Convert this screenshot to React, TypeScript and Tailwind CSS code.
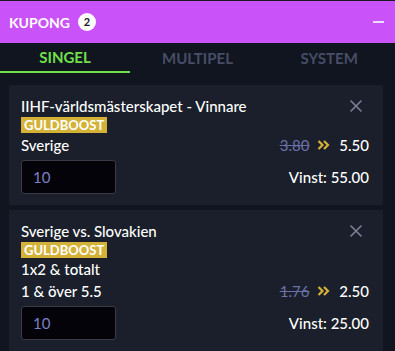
import React from 'react';

const CloseIcon = () => (
  <svg width="12" height="12" viewBox="0 0 12 12" className="text-[#7d8096]">
    <path d="M1 1L11 11M11 1L1 11" stroke="currentColor" strokeWidth="1.6" strokeLinecap="round" />
  </svg>
);

const Chevrons = () => (
  <svg width="14" height="10" viewBox="0 0 14 10" className="text-[#d6b23a]">
    <path d="M1.5 1L5.5 5L1.5 9M7 1L11 5L7 9" stroke="currentColor" strokeWidth="2.2" fill="none" />
  </svg>
);

type Bet = {
  title: string;
  lines: string[];
  oldOdds: string;
  odds: string;
  win: string;
};

const bets: Bet[] = [
  { title: 'IIHF-världsmästerskapet - Vinnare', lines: ['Sverige'], oldOdds: '3.80', odds: '5.50', win: '55.00' },
  { title: 'Sverige vs. Slovakien', lines: ['1x2 & totalt', '1 & över 5.5'], oldOdds: '1.76', odds: '2.50', win: '25.00' },
];

const BetCard = ({ bet }: { bet: Bet }) => {
  const last = bet.lines[bet.lines.length - 1];
  const rest = bet.lines.slice(0, -1);
  return (
    <div className="bg-[#1a1f2b] pl-3 pr-3 pt-[11px] pb-[11px] leading-[20px]">
      <div className="flex items-center justify-between h-[20px]">
        <span className="text-[15px] font-medium text-white">{bet.title}</span>
        <span className="mr-[9px] flex"><CloseIcon /></span>
      </div>
      <div className="mt-[1px] w-fit bg-[#d4b238] px-[3px] h-[16px] leading-[16px] text-[13px] font-bold text-white">
        GULDBOOST
      </div>
      {rest.map((l) => (
        <div key={l} className="text-[15px] font-medium text-white h-[20px] leading-[20px] mt-[1px]">{l}</div>
      ))}
      <div className="flex items-center justify-between h-[20px] mt-[2px]">
        <span className="text-[15px] font-medium text-white">{last}</span>
        <div className="flex items-center gap-[8px] mr-[2px]">
          <span className="text-[15px] text-[#6b72a8] line-through">{bet.oldOdds}</span>
          <Chevrons />
          <span className="text-[15px] font-medium text-white">{bet.odds}</span>
        </div>
      </div>
      <div className="flex items-center justify-between mt-[5px]">
        <div className="w-[95px] h-[34px] bg-[#05030a] border border-[#3b3a45] rounded-[3px] flex items-center pl-[11px] text-[15px] text-[#7a80c6]">
          10
        </div>
        <span className="text-[15px] font-medium text-white mr-[2px]">Vinst: {bet.win}</span>
      </div>
    </div>
  );
};

const App = () => {
  return (
    <div className="w-[395px] h-[351px] overflow-hidden bg-[#11151f]" style={{ fontFamily: 'Lato, "Noto Sans", sans-serif' }}>
      <div className="h-[1px] bg-[#1b1b22]" />
      <div className="h-[42px] bg-[#c953f8] flex items-center justify-between pl-[9px] pr-[11px]">
        <div className="flex items-center gap-[8px]">
          <span className="text-[14px] font-bold text-white">KUPONG</span>
          <span className="w-[18px] h-[18px] rounded-full bg-white flex items-center justify-center text-[11px] font-bold text-[#1a1a22]">2</span>
        </div>
        <span className="w-[11px] h-[2px] bg-[#eedcff]" />
      </div>
      <div className="grid grid-cols-3 h-[30px]">
        <div className="flex items-center justify-center text-[15px] font-bold text-[#6fe04a] border-b-2 border-[#6fe04a] w-[130px]">SINGEL</div>
        <div className="flex items-center justify-center text-[15px] font-bold text-[#474d66]">MULTIPEL</div>
        <div className="flex items-center justify-center text-[15px] font-bold text-[#474d66]">SYSTEM</div>
      </div>
      <div className="pl-[9px] pr-[12px] pt-[12px] flex flex-col gap-[5px]">
        {bets.map((b) => (
          <BetCard key={b.title} bet={b} />
        ))}
      </div>
    </div>
  );
};

export default App;
